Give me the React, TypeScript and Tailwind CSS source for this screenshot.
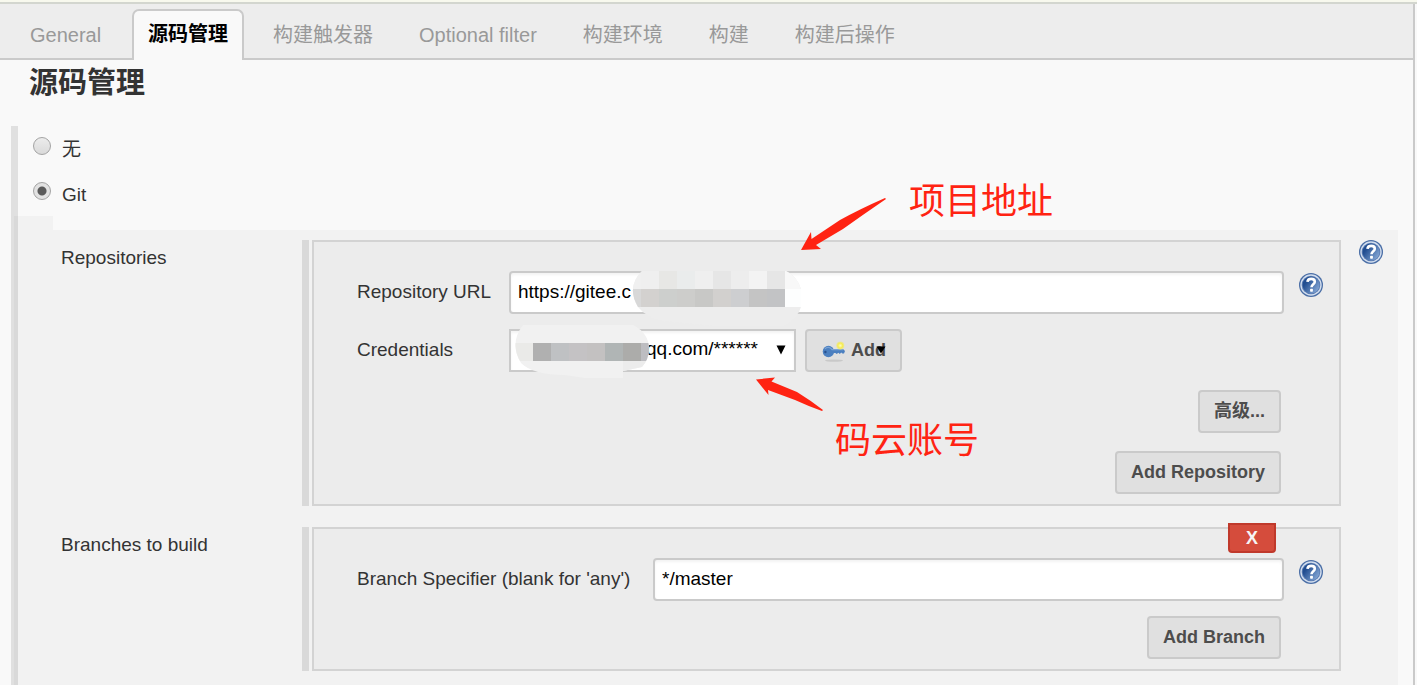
import type { ReactNode } from "react";

const tabs = ["构建触发器", "Optional filter", "构建环境", "构建", "构建后操作"];

function HelpIcon() {
  return (
    <svg viewBox="0 0 24 24" className="block size-6">
      <defs>
        <linearGradient id="help-fill" x1="0" y1="0.2" x2="1" y2="0.9">
          <stop offset="0.2" stopColor="#214d90" />
          <stop offset="1" stopColor="#8fb0dc" />
        </linearGradient>
      </defs>
      <circle cx="12" cy="12" r="12" fill="#4a6ea6" />
      <circle cx="12" cy="12" r="10.7" fill="#d3deee" />
      <circle cx="12" cy="12" r="9.3" fill="#5b7db3" />
      <circle cx="12" cy="12" r="8.4" fill="url(#help-fill)" />
      <path d="M8.5 8.9C8.6 6.8 10 5.9 12.2 5.9C14.5 5.9 15.8 7 15.8 8.8C15.8 11.2 12.6 11.3 12.5 14.2" fill="none" stroke="#fff" strokeWidth="2.6" />
      <rect x="11.1" y="15.8" width="2.8" height="2.9" rx="0.6" fill="#fff" />
    </svg>
  );
}

function HelpButton() {
  return (
    <button type="button" aria-label="Help" className="size-6 shrink-0 rounded-full">
      <HelpIcon />
    </button>
  );
}

function KeyIcon() {
  return (
    <svg viewBox="0 0 24 24" className="block size-6">
      <defs>
        <radialGradient id="key-glow">
          <stop offset="0" stopColor="#fffcc0" />
          <stop offset="0.6" stopColor="#f6ec50" />
          <stop offset="1" stopColor="#f0e870" stopOpacity="0.5" />
        </radialGradient>
      </defs>
      <ellipse cx="13" cy="22.6" rx="9" ry="1.1" fill="#c9c9c9" />
      <path d="M11 11H22L24 13L23 15.4H21.4L20.2 14.6L18.8 16L17.4 14.8L15.8 16L14.4 15H11Z" fill="#4c80c0" />
      <circle cx="7.4" cy="13.5" r="5.7" fill="#4c80c0" />
      <path d="M4 10.8C5.6 8.8 9.2 8.8 11 11.6H22" fill="none" stroke="#7ba3d4" strokeWidth="1.2" />
      <circle cx="4.4" cy="14" r="1.2" fill="#28518f" />
      <circle cx="19.3" cy="7.6" r="4.1" fill="url(#key-glow)" />
    </svg>
  );
}

function GreyButton({ children }: { children: ReactNode }) {
  return (
    <button
      type="button"
      className="flex h-[43px] items-center rounded-[4px] border-2 border-[#cacaca] bg-[#e0e0e0] px-[14px] pb-0.5 text-lg font-bold text-[#4d4d4d]"
    >
      {children}
    </button>
  );
}

function Section({ title, help, children }: { title: string; help?: boolean; children: ReactNode }) {
  return (
    <section className="flex items-start">
      <h2 className="w-[241px] shrink-0 pt-1 leading-7">{title}</h2>
      <div className="mr-[3px] w-[7px] shrink-0 self-stretch bg-[#d9d9d9]" />
      <div className="relative min-w-0 flex-1 border-2 border-[#d3d3d3] bg-[#ececec] pr-4 pb-[10px] pl-[43px]">
        {children}
      </div>
      <div className="ml-[18px] w-[39px] shrink-0">{help && <HelpButton />}</div>
    </section>
  );
}

function Radio({ label, value, checked }: { label: string; value: string; checked?: boolean }) {
  return (
    <label className="flex h-[45px] items-start pt-[10px]">
      <input
        type="radio"
        name="scm"
        value={value}
        defaultChecked={checked}
        className="mt-px mr-[11px] size-[18px] shrink-0 appearance-none rounded-full border border-[#a3a3a3] bg-linear-to-b from-[#ececec] to-[#dadada] checked:bg-[radial-gradient(circle,#5a5a5a_4px,#e2e2e2_5px)]"
      />
      <span className="leading-7">{label}</span>
    </label>
  );
}

function UrlMask() {
  const top = ["#efefef", "#e7e7e5", "#eaecec", "#efefef", "#e6e6e6", "#ededed", "#f3f3f3", "#e6e6e6"];
  const mid = ["#d3d1cf", "#cdcfcd", "#cdcdcb", "#c8c8c6", "#d2d0ce", "#cdced0", "#c4c4c4", "#c2c3c5"];
  return (
    <svg viewBox="0 0 171 56" className="pointer-events-none absolute top-0 left-[123px] h-14 w-[171px]">
      <clipPath id="url-mask">
        <path d="M10 0H154Q165 5 169 18V36Q166 47 152 55H80L30 50Q14 46 6 36Q-6 16 10 0Z" />
      </clipPath>
      <g clipPath="url(#url-mask)" shapeRendering="crispEdges">
        <rect width="171" height="56" fill="#ededed" />
        <rect width="9" height="18" fill="#f0f0f0" />
        <rect y="18" width="9" height="18" fill="#d8d8d8" />
        {top.map((c, i) => <rect key={i} x={9 + i * 18} width="18" height="18" fill={c} />)}
        {mid.map((c, i) => <rect key={i} x={9 + i * 18} y="18" width="18" height="18" fill={c} />)}
        <rect x="153" width="18" height="18" fill="#f8f8f8" />
        <rect x="153" y="18" width="18" height="18" fill="#fdfefe" />
      </g>
    </svg>
  );
}

function AccountMask() {
  const mid = ["#b0b0b0", "#bfc1c3", "#c4c2c4", "#c3c1c1", "#b0b5b5", "#acacaa", "#bdbdc1"];
  return (
    <svg viewBox="0 0 136 54" className="pointer-events-none absolute -top-1 left-[6px] h-[54px] w-[136px]">
      <clipPath id="account-mask">
        <path d="M8 0H118Q134 8 134 24Q134 34 127 42L108 46V53H70L50 50Q18 50 6 38Q-6 18 8 0Z" />
      </clipPath>
      <g clipPath="url(#account-mask)" shapeRendering="crispEdges">
        <rect width="136" height="54" fill="#f1f1f1" />
        <rect y="18" width="18" height="18" fill="#eaeae8" />
        <rect x="108" y="36" width="28" height="18" fill="#ececec" />
        {mid.map((c, i) => <rect key={i} x={18 + i * 18} y="18" width="18" height="18" fill={c} />)}
      </g>
    </svg>
  );
}

const field = "h-[43px] w-full border-2 border-[#cacaca] bg-white px-[7px] pb-0.5 text-black shadow-[inset_0_2px_3px_#0000000d] outline-none";

export default function App() {
  return (
    <div className="min-h-screen bg-[#f9f9f9] pr-0.5 font-['Liberation_Sans','Noto_Sans_CJK_SC',sans-serif] text-[19px] text-[#333]">
      <div className="-mr-0.5 h-1 border-b-2 border-[#d3d6cf] bg-[#f8f9ee]" />
      <main className="relative flex min-h-[calc(100vh-4px)] flex-col border-r-2 border-[#cacaca]">
        <nav className="flex h-14 items-end border-b-2 border-[#cacaca] bg-[#ededed] pl-[30px] text-xl">
          <a href="#general" className="flex h-[47px] w-[102px] items-center text-[#999]">General</a>
          <a href="#scm" className="-mb-0.5 flex h-[51px] items-center rounded-t-[7px] border-2 border-b-0 border-[#cacaca] bg-[#f9f9f9] px-[14px] pb-1 font-bold text-black">
            源码管理
          </a>
          <div className="flex gap-[46px] pl-[29px]">
            {tabs.map((tab) => (
              <a key={tab} href={`#${tab}`} className="flex h-[47px] items-center text-[#999]">{tab}</a>
            ))}
          </div>
        </nav>

        <h1 className="h-[66px] pl-[29px] text-[29px] leading-[46px] font-bold">源码管理</h1>

        <div className="ml-[11px] flex flex-1 flex-col border-l-3 border-[#e0e0e0]">
          <div className="h-[90px] border-l-4 border-[#e0e0e0] pl-[15px]">
            <Radio label="无" value="none" />
            <Radio label="Git" value="git" checked />
          </div>
          <div className="flex flex-1 border-l-4 border-[#d9d9d9] pr-[15px]">
            <div className="w-[35px] shrink-0 bg-[#f2f2f2]" />
            <div className="mt-[14px] flex min-w-0 flex-1 flex-col gap-[21px] bg-[#f2f2f2] pt-[10px] pb-[14px] pl-2">
              <Section title="Repositories" help>
                <div className="flex items-start pt-[29px]">
                  <label htmlFor="url" className="w-[152px] shrink-0 leading-[41px]">Repository URL</label>
                  <div className="relative mr-[15px] min-w-0 flex-1">
                    <input id="url" type="text" defaultValue="https://gitee.c" className={`${field} rounded-[4px]`} />
                    <UrlMask />
                  </div>
                  <div className="pt-0.5"><HelpButton /></div>
                </div>
                <div className="flex items-start pt-[15px]">
                  <label htmlFor="credentials" className="w-[152px] shrink-0 leading-[41px]">Credentials</label>
                  <div className="relative mr-[9px] w-[287px]">
                    <select id="credentials" className={`${field} appearance-none pl-[135px]`}>
                      <option>qq.com/******</option>
                    </select>
                    <svg viewBox="0 0 10 10" className="pointer-events-none absolute top-4 right-[10px] size-[10px]">
                      <path d="M0.5 0.5H9.5L5 9.5Z" fill="#000" />
                    </svg>
                    <AccountMask />
                  </div>
                  <GreyButton>
                    <span className="relative flex items-center gap-1.5">
                      <KeyIcon />
                      Add
                      <svg viewBox="0 0 10 8" className="absolute right-0 h-2 w-[10px]">
                        <path d="M0.5 0.5H9.5L5 7.5Z" fill="#000" />
                      </svg>
                    </span>
                  </GreyButton>
                </div>
                <div className="flex flex-col items-end gap-[18px] pt-[18px] pr-[42px]">
                  <GreyButton>高级...</GreyButton>
                  <GreyButton>Add Repository</GreyButton>
                </div>
              </Section>

              <Section title="Branches to build">
                <button type="button" className="absolute -top-[6px] right-[63px] h-[30px] w-12 rounded-b-[4px] border-2 border-[#c0392b] bg-[#d54c3c] text-lg leading-6 font-bold text-[#f5f5f5]">
                  X
                </button>
                <div className="flex items-start pt-[29px]">
                  <label htmlFor="branch" className="w-[296px] shrink-0 leading-[41px]">Branch Specifier (blank for 'any')</label>
                  <input id="branch" type="text" defaultValue="*/master" className={`${field} mr-[15px] min-w-0 flex-1 rounded-[4px]`} />
                  <div className="pt-0.5"><HelpButton /></div>
                </div>
                <div className="flex justify-end pt-[15px] pr-[42px]">
                  <GreyButton>Add Branch</GreyButton>
                </div>
              </Section>
            </div>
          </div>
        </div>

        <p className="absolute top-[173px] left-[909px] text-4xl leading-[50px] text-[#ff2312]">项目地址</p>
        <p className="absolute top-[412px] left-[835px] text-4xl leading-[50px] text-[#ff2312]">码云账号</p>
        <svg viewBox="0 0 86 54" className="pointer-events-none absolute top-[193px] left-[800px] h-[54px] w-[86px]">
          <path d="M1 53L11 35L11.5 42L40 23Q60 12 85 1L86 2Q64 17 43 32L16 48L21 52Z" fill="#ff2312" />
        </svg>
        <svg viewBox="0 0 68 36" className="pointer-events-none absolute top-[373px] left-[756px] h-9 w-[68px]">
          <path d="M0 2.5L19 0.5L15.5 4.5L41 15Q54 23 67 33L66 34Q52 29 39 23L12 13L12.5 18Z" fill="#ff2312" />
        </svg>
      </main>
    </div>
  );
}
